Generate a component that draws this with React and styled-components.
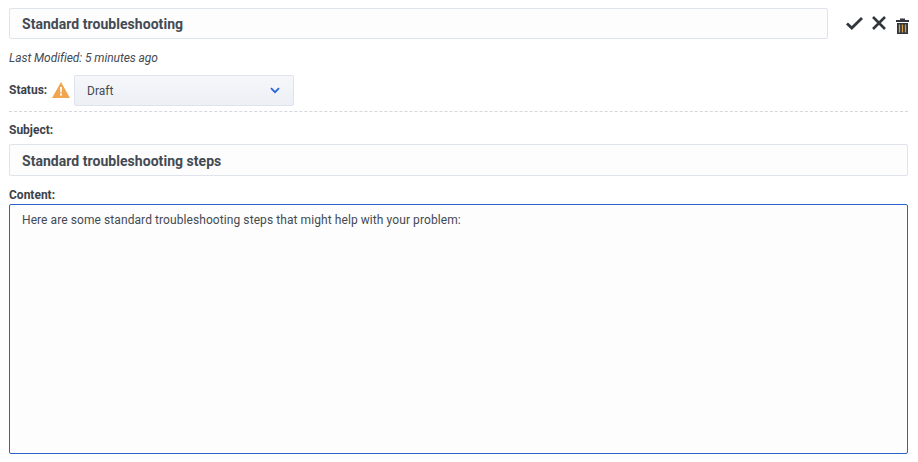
import React from "react";
import styled, { createGlobalStyle } from "styled-components";

const GlobalStyle = createGlobalStyle`
  html, body {
    margin: 0;
    padding: 0;
    background: #ffffff;
  }
  body {
    font-family: Roboto, "Liberation Sans", sans-serif;
    color: #444a52;
  }
`;

export default function App() {
  return (
    <>
      <GlobalStyle />
      <Page>
        <TitleRow>
          <TitleInput readOnly value="Standard troubleshooting" />
          <Actions>
            <IconButton aria-label="Save">
              <svg width="17" height="14" viewBox="0 0 17 14">
                <path d="M1 7.5 L5.8 12 L16 2" fill="none" stroke="#32373d" strokeWidth="2.8" />
              </svg>
            </IconButton>
            <IconButton aria-label="Cancel">
              <svg width="16" height="16" viewBox="0 0 16 16">
                <path d="M2 2 L14 14 M14 2 L2 14" fill="none" stroke="#32373d" strokeWidth="2.6" />
              </svg>
            </IconButton>
            <IconButton aria-label="Delete" $down>
              <svg width="13" height="16" viewBox="0 0 13 16">
                <path d="M0 2 H4 V0.5 H9 V2 H13 V4 H0 Z" fill="#32373d" />
                <path d="M1 5 H12 V16 H1 Z" fill="#32373d" />
                <path d="M3.5 6.5 V14.5 M6.5 6.5 V14.5 M9.5 6.5 V14.5" stroke="#d9a04c" strokeWidth="1.3" />
              </svg>
            </IconButton>
          </Actions>
        </TitleRow>
        <Modified>Last Modified: 5 minutes ago</Modified>
        <StatusRow>
          <StatusLabel>Status:</StatusLabel>
          <WarnIcon width="18" height="16" viewBox="0 0 18 16">
            <path d="M9 0 L18 16 H0 Z" fill="#f0a64e" />
            <path d="M8 5 H10 L9.7 10.5 H8.3 Z M8 11.5 H10 V13.5 H8 Z" fill="#ffffff" />
          </WarnIcon>
          <Select>
            <span>Draft</span>
            <svg width="10" height="7" viewBox="0 0 10 7">
              <path d="M1 1.2 L5 5.2 L9 1.2" fill="none" stroke="#2a64d8" strokeWidth="1.8" />
            </svg>
          </Select>
        </StatusRow>
        <Divider />
        <Label as="div">Subject:</Label>
        <SubjectInput readOnly value="Standard troubleshooting steps" />
        <ContentLabel>Content:</ContentLabel>
        <ContentBox>
          Here are some standard troubleshooting steps that might help with your problem:
        </ContentBox>
      </Page>
    </>
  );
}

const Page = styled.div`
  padding: 8px 10px 0 9px;
  width: 918px;
  height: 462px;
  box-sizing: border-box;
  overflow: hidden;
`;

const TitleRow = styled.div`
  display: flex;
  align-items: flex-start;
`;

const TitleInput = styled.input`
  flex: none;
  width: 819px;
  height: 31px;
  box-sizing: border-box;
  border: 1px solid #dfe3ec;
  border-radius: 2px;
  background: #fdfdfd;
  padding: 0 12px;
  font: 700 14px Roboto, sans-serif;
  letter-spacing: 0.04px;
  color: #444a52;
  outline: none;
`;

const Actions = styled.div`
  flex: none;
  display: flex;
  align-items: center;
  margin-left: 18px;
  gap: 8px;
  height: 29px;
`;

const IconButton = styled.span`
  display: flex;
  margin-top: ${(p) => (p.$down ? "7px" : "0")};
  margin-left: ${(p) => (p.$down ? "1px" : "0")};
`;

const Modified = styled.div`
  font-size: 12px;
  font-style: italic;
  line-height: 14px;
  letter-spacing: -0.07px;
  margin-top: 12px;
`;

const StatusRow = styled.div`
  display: flex;
  align-items: center;
  margin-top: 10px;
`;

const Label = styled.label`
  font-size: 12px;
  font-weight: 700;
  line-height: 14px;
  color: #3c4149;
`;

const StatusLabel = styled(Label)`
  width: 43px;
  margin-bottom: 2px;
`;

const WarnIcon = styled.svg`
  margin: 0 4px 2px 0;
`;

const Select = styled.div`
  width: 220px;
  height: 31px;
  box-sizing: border-box;
  border: 1px solid #dfe3ec;
  border-radius: 2px;
  background: linear-gradient(#f5f7fa, #eceff5);
  display: flex;
  align-items: center;
  justify-content: space-between;
  padding: 0 13px 0 12px;
  font-size: 12px;
  color: #444a52;
`;

const Divider = styled.div`
  border-top: 1px dashed #d4d7dc;
  margin: 5px 0 11px;
`;

const SubjectInput = styled.input`
  display: block;
  width: 100%;
  height: 32px;
  box-sizing: border-box;
  margin-top: 7px;
  border: 1px solid #dfe3ec;
  border-radius: 2px;
  background: #fdfdfd;
  padding: 1px 12px 0;
  font: 700 14px Roboto, sans-serif;
  letter-spacing: 0.04px;
  color: #444a52;
  outline: none;
`;

const ContentLabel = styled(Label).attrs({ as: "div" })`
  margin-top: 12px;
`;

const ContentBox = styled.div`
  margin-top: 2px;
  height: 250px;
  box-sizing: border-box;
  border: 1px solid #2a64c8;
  border-radius: 2px;
  background: #fdfdfd;
  padding: 8px 12px;
  font-size: 12px;
  line-height: 15px;
  letter-spacing: 0.08px;
  color: #444a52;
`;
